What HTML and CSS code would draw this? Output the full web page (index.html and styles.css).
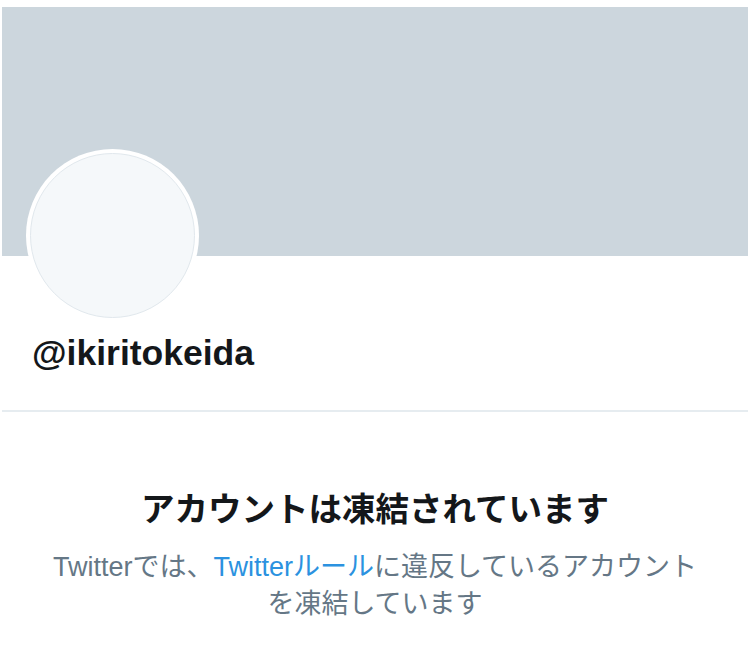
FILE: index.html
```html
<!DOCTYPE html>
<html lang="ja">
<head>
<meta charset="utf-8">
<title>@ikiritokeida</title>
<link rel="stylesheet" href="styles.css">
</head>
<body>
<div class="page">
  <div class="banner"></div>
  <div class="avatar"><div class="avatar-inner"></div></div>
  <div class="username">@ikiritokeida</div>
  <div class="divider"></div>
  <div class="notice">
    <h1 class="notice-title">アカウントは凍結されています</h1>
    <p class="notice-text">Twitterでは、<a class="link" href="#">Twitterルール</a>に違反しているアカウントを凍結しています</p>
  </div>
</div>
</body>
</html>
```
FILE: styles.css
```css
html, body {
  margin: 0;
  padding: 0;
  background: #ffffff;
}
body {
  font-family: "Liberation Sans", "Noto Sans CJK JP", sans-serif;
  color: #14171a;
}
.page {
  width: 746px;
  padding: 7px 2px 0;
}
.banner {
  height: 249px;
  background: #ccd6dd;
}
.avatar {
  width: 173px;
  height: 173px;
  margin: -107px 0 0 24px;
  box-sizing: border-box;
  border-radius: 50%;
  background: #ffffff;
  padding: 4px;
}
.avatar-inner {
  width: 100%;
  height: 100%;
  box-sizing: border-box;
  border-radius: 50%;
  border: 1px solid #e1e8ed;
  background: #f5f8fa;
}
.username {
  margin: 10px 0 0 30px;
  font-size: 35.5px;
  line-height: 42px;
  font-weight: 700;
  color: #14171a;
}
.divider {
  height: 2px;
  margin-top: 36px;
  background: #e6ecf0;
}
.notice {
  text-align: center;
  padding: 0 44px;
}
.notice-title {
  margin: 73px 0 0;
  font-family: "Noto Sans CJK JP", sans-serif;
  font-size: 33.5px;
  line-height: 44px;
  font-weight: 700;
  color: #14171a;
}
.notice-text {
  margin: 20px 0 0;
  font-family: "Liberation Sans", "Noto Sans CJK JP", sans-serif;
  font-size: 27px;
  line-height: 37px;
  color: #657786;
}
.link {
  color: #2b92e0;
  text-decoration: none;
}
```
